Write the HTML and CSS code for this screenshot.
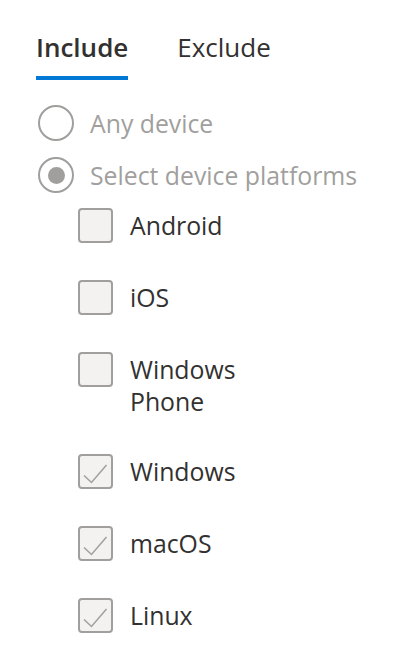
FILE: index.html
```html
<!DOCTYPE html>
<html lang="en">
<head>
    <meta charset="UTF-8">
    <meta name="viewport" content="width=device-width, initial-scale=1.0">
    <title>Device platforms</title>
    <link rel="stylesheet" href="styles.css">
</head>
<body>

<div class="panel">
    <div class="tabs">
        <div class="tab active">Include</div>
        <div class="tab">Exclude</div>
    </div>

    <div class="radios">
        <div class="radio-row">
            <span class="radio"></span>
            <span class="radio-label">Any device</span>
        </div>
        <div class="radio-row">
            <span class="radio checked"></span>
            <span class="radio-label">Select device platforms</span>
        </div>
    </div>

    <div class="checks">
        <div class="check-row">
            <span class="box"></span>
            <span class="check-label">Android</span>
        </div>
        <div class="check-row">
            <span class="box"></span>
            <span class="check-label">iOS</span>
        </div>
        <div class="check-row">
            <span class="box"></span>
            <span class="check-label">Windows<br>Phone</span>
        </div>
        <div class="check-row">
            <span class="box">
                <svg viewBox="0 0 35 35" width="35" height="35"><path d="M6 21.5 L13.5 28.5 L28.5 11" /></svg>
            </span>
            <span class="check-label">Windows</span>
        </div>
        <div class="check-row">
            <span class="box">
                <svg viewBox="0 0 35 35" width="35" height="35"><path d="M6 21.5 L13.5 28.5 L28.5 11" /></svg>
            </span>
            <span class="check-label">macOS</span>
        </div>
        <div class="check-row">
            <span class="box">
                <svg viewBox="0 0 35 35" width="35" height="35"><path d="M6 21.5 L13.5 28.5 L28.5 11" /></svg>
            </span>
            <span class="check-label">Linux</span>
        </div>
    </div>
</div>

</body>
</html>
```

FILE: styles.css
```css
/* Reset */
* {
    margin: 0;
    padding: 0;
    box-sizing: border-box;
}

body {
    font-family: "Open Sans", "Noto Sans", sans-serif;
    font-size: 24.8px;
    background-color: #ffffff;
    color: #323130;
}

.panel {
    padding: 31px 0 0 36px;
}

/* Tabs */
.tabs {
    display: flex;
    gap: 49px;
}

.tab {
    font-size: 26px;
    line-height: 32px;
    padding-bottom: 13px;
    border-bottom: 4px solid transparent;
}

.tab.active {
    font-weight: 600;
    border-bottom-color: #0078d4;
}

/* Radio group */
.radios {
    display: flex;
    flex-direction: column;
    gap: 16px;
    margin-top: 25px;
    margin-left: 2px;
}

.radio-row {
    display: flex;
    align-items: center;
    gap: 16px;
}

.radio {
    width: 36px;
    height: 36px;
    border: 2px solid #a19f9d;
    border-radius: 50%;
    display: flex;
    align-items: center;
    justify-content: center;
    flex-shrink: 0;
}

.radio.checked::after {
    content: "";
    width: 17px;
    height: 17px;
    border-radius: 50%;
    background-color: #a19f9d;
}

.radio-label {
    color: #a19f9d;
    line-height: 32px;
}

/* Checkbox list */
.checks {
    display: flex;
    flex-direction: column;
    gap: 37px;
    margin-top: 15px;
    margin-left: 42px;
}

.check-row {
    display: flex;
    align-items: flex-start;
    gap: 17px;
}

.box {
    width: 35px;
    height: 35px;
    border: 2px solid #a19f9d;
    border-radius: 4px;
    background-color: #f3f2f1;
    flex-shrink: 0;
    position: relative;
}

.box svg {
    position: absolute;
    left: -2px;
    top: -2px;
}

.box path {
    fill: none;
    stroke: #a19f9d;
    stroke-width: 1.5;
}

.check-label {
    line-height: 32px;
    padding-top: 1px;
}
```
